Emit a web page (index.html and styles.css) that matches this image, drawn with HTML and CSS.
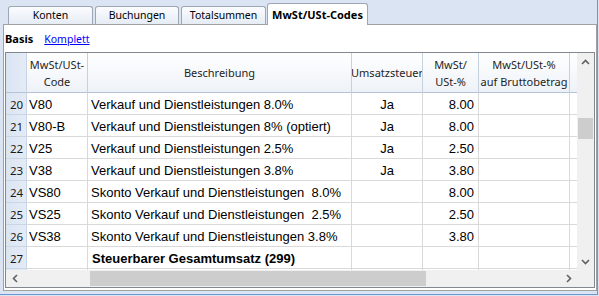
FILE: index.html
```html
<!DOCTYPE html>
<html lang="de">
  <head>
    <meta charset="utf-8">
    <title>MwSt/USt-Codes</title>
    <link rel="stylesheet" href="styles.css">
  </head>
  <body>
    <div class="window">
      <div class="tabs">
        <div class="tab">Konten</div>
        <div class="tab narrow">Buchungen</div>
        <div class="tab">Totalsummen</div>
        <div class="tab active">MwSt/USt-Codes</div>
      </div>

      <div class="panel">
        <div class="views">
          <b>Basis</b>
          <a href="#">Komplett</a>
        </div>

        <div class="grid">
          <div class="viewport">
            <div class="row head">
              <div class="hcell num"></div>
              <div class="hcell">MwSt/USt-<br>Code</div>
              <div class="hcell">Beschreibung</div>
              <div class="hcell">Umsatzsteuer</div>
              <div class="hcell">MwSt/<br>USt-%</div>
              <div class="hcell">MwSt/USt-%<br>auf Bruttobetrag</div>
              <div class="hcell"></div>
            </div>

            <div class="row">
              <div class="cell num">20</div>
              <div class="cell code">V80</div>
              <div class="cell desc">Verkauf und Dienstleistungen 8.0%</div>
              <div class="cell mid">Ja</div>
              <div class="cell amount">8.00</div>
              <div class="cell"></div>
              <div class="cell"></div>
            </div>
            <div class="row">
              <div class="cell num">21</div>
              <div class="cell code">V80-B</div>
              <div class="cell desc">Verkauf und Dienstleistungen 8% (optiert)</div>
              <div class="cell mid">Ja</div>
              <div class="cell amount">8.00</div>
              <div class="cell"></div>
              <div class="cell"></div>
            </div>
            <div class="row">
              <div class="cell num">22</div>
              <div class="cell code">V25</div>
              <div class="cell desc">Verkauf und Dienstleistungen 2.5%</div>
              <div class="cell mid">Ja</div>
              <div class="cell amount">2.50</div>
              <div class="cell"></div>
              <div class="cell"></div>
            </div>
            <div class="row">
              <div class="cell num">23</div>
              <div class="cell code">V38</div>
              <div class="cell desc">Verkauf und Dienstleistungen 3.8%</div>
              <div class="cell mid">Ja</div>
              <div class="cell amount">3.80</div>
              <div class="cell"></div>
              <div class="cell"></div>
            </div>
            <div class="row">
              <div class="cell num">24</div>
              <div class="cell code">VS80</div>
              <div class="cell desc">Skonto Verkauf und Dienstleistungen  8.0%</div>
              <div class="cell mid"></div>
              <div class="cell amount">8.00</div>
              <div class="cell"></div>
              <div class="cell"></div>
            </div>
            <div class="row">
              <div class="cell num">25</div>
              <div class="cell code">VS25</div>
              <div class="cell desc">Skonto Verkauf und Dienstleistungen  2.5%</div>
              <div class="cell mid"></div>
              <div class="cell amount">2.50</div>
              <div class="cell"></div>
              <div class="cell"></div>
            </div>
            <div class="row">
              <div class="cell num">26</div>
              <div class="cell code">VS38</div>
              <div class="cell desc">Skonto Verkauf und Dienstleistungen 3.8%</div>
              <div class="cell mid"></div>
              <div class="cell amount">3.80</div>
              <div class="cell"></div>
              <div class="cell"></div>
            </div>
            <div class="row">
              <div class="cell num">27</div>
              <div class="cell code"></div>
              <div class="cell desc total">Steuerbarer Gesamtumsatz (299)</div>
              <div class="cell mid"></div>
              <div class="cell amount"></div>
              <div class="cell"></div>
              <div class="cell"></div>
            </div>
            <!-- next row, hidden behind the scrollbar -->
            <div class="row">
              <div class="cell num"></div>
              <div class="cell"></div>
              <div class="cell"></div>
              <div class="cell"></div>
              <div class="cell"></div>
              <div class="cell"></div>
              <div class="cell"></div>
            </div>
          </div>

          <!-- vertical scrollbar -->
          <div class="vscroll">
            <div class="sbtn">
              <svg width="9" height="6" viewBox="0 0 9 6"><path d="M1 5 4.5 1.5 8 5" fill="none" stroke="#606060" stroke-width="1.6"/></svg>
            </div>
            <div class="track"><div class="vthumb"></div></div>
            <div class="sbtn">
              <svg width="9" height="6" viewBox="0 0 9 6"><path d="M1 1 4.5 4.5 8 1" fill="none" stroke="#606060" stroke-width="1.6"/></svg>
            </div>
          </div>

          <!-- horizontal scrollbar -->
          <div class="hscroll">
            <div class="sbtn">
              <svg width="6" height="9" viewBox="0 0 6 9"><path d="M5 1 1.5 4.5 5 8" fill="none" stroke="#606060" stroke-width="1.6"/></svg>
            </div>
            <div class="track"><div class="hthumb"></div></div>
            <div class="sbtn">
              <svg width="6" height="9" viewBox="0 0 6 9"><path d="M1 1 4.5 4.5 1 8" fill="none" stroke="#606060" stroke-width="1.6"/></svg>
            </div>
          </div>

          <div class="corner"></div>
        </div>
      </div>
    </div>
  </body>
</html>
```

FILE: styles.css
```css
body {
  margin: 0;
  background-color: #dae4f2;
  color: #000;
  font-family: "Noto Sans", "Open Sans", sans-serif;
}
.window {
  box-sizing: border-box;
  width: 598px;
  height: 295px;
  padding: 3px 0 3px 3px;
  border-right: 1px solid #6c98d0;
  border-bottom: 1px solid #6c98d0;
  display: flex;
  flex-direction: column;
}

/* tabs */
.tabs {
  display: flex;
  align-items: flex-end;
  height: 21px;
  padding-left: 5px;
  flex: none;
}
.tab {
  box-sizing: border-box;
  width: 85px;
  height: 18px;
  margin-right: 2px;
  border: 1px solid #9ea7b3;
  border-bottom: 0;
  border-radius: 3px 3px 0 0;
  background: linear-gradient(#fbfcfe, #e6ecf5);
  font-size: 10.5px;
  line-height: 17px;
  text-align: center;
  white-space: nowrap;
}
.tab.narrow {
  width: 84px;
}
.tab.active {
  position: relative;
  z-index: 1;
  width: 101px;
  height: 22px;
  margin: 0 0 -1px -1px;
  background: #fff;
  font-size: 11px;
  font-weight: bold;
  line-height: 21px;
}

/* panel */
.panel {
  flex: 1;
  min-height: 0;
  border: 1px solid #a0a0a0;
  background-color: #fff;
  display: flex;
  flex-direction: column;
}
.views {
  height: 27px;
  flex: none;
  display: flex;
  align-items: center;
  gap: 11px;
  padding-left: 1px;
  font-size: 11px;
}
.views a {
  color: #0000ff;
  font-size: 10.5px;
}

/* grid */
.grid {
  flex: 1;
  min-height: 0;
  margin: 0 1px 2px 1px;
  border: 1px solid #828790;
  display: grid;
  grid-template-columns: minmax(0, 1fr) 17px;
  grid-template-rows: minmax(0, 1fr) 17px;
}
.viewport {
  overflow: hidden;
}
.row {
  display: grid;
  grid-template-columns: 21px 61px 264px 71px 56px 91px 40px;
  height: 22px;
}
.row.head {
  height: 40px;
}
.hcell {
  box-sizing: border-box;
  display: flex;
  align-items: center;
  justify-content: center;
  text-align: center;
  background: linear-gradient(#ffffff, #eef2f8);
  border-right: 1px solid #c6d1df;
  border-bottom: 1px solid #b5c3d6;
  color: #1e1e1e;
  font-size: 11px;
  line-height: 17px;
  white-space: nowrap;
  overflow: hidden;
}
.cell {
  box-sizing: border-box;
  padding: 1px 3px 0 3px;
  border-right: 1px solid #d9d9d9;
  border-bottom: 1px solid #d9d9d9;
  font-family: "Liberation Sans", Arial, sans-serif;
  font-size: 13px;
  line-height: 21px;
  white-space: pre;
  overflow: hidden;
}
.hcell.num,
.cell.num {
  background: linear-gradient(90deg, #dbe5f2, #e3ebf6);
  border-right-color: #c9d5e4;
}
.cell.num {
  padding-left: 4px;
  border-bottom-color: #cbd6e4;
  font-family: "Noto Sans", sans-serif;
  font-size: 11.5px;
  color: #1a1a1a;
}
.cell.code {
  padding-left: 2px;
}
.cell.desc {
  padding-left: 3px;
}
.cell.total {
  padding-left: 4px;
  font-weight: bold;
}
.cell.mid {
  text-align: center;
}
.cell.amount {
  text-align: right;
  padding-right: 4px;
}

/* scrollbars */
.vscroll,
.hscroll,
.corner {
  background-color: #f0f0f0;
}
.vscroll {
  display: flex;
  flex-direction: column;
}
.hscroll {
  display: flex;
}
.sbtn {
  flex: none;
  width: 17px;
  height: 17px;
  display: flex;
  align-items: center;
  justify-content: center;
}
.track {
  flex: 1;
}
.vthumb {
  height: 21px;
  margin: 48px 1px 0 1px;
  background-color: #cdcdcd;
}
.hthumb {
  width: 336px;
  height: 15px;
  margin: 1px 0 0 67px;
  background-color: #cdcdcd;
}
```
